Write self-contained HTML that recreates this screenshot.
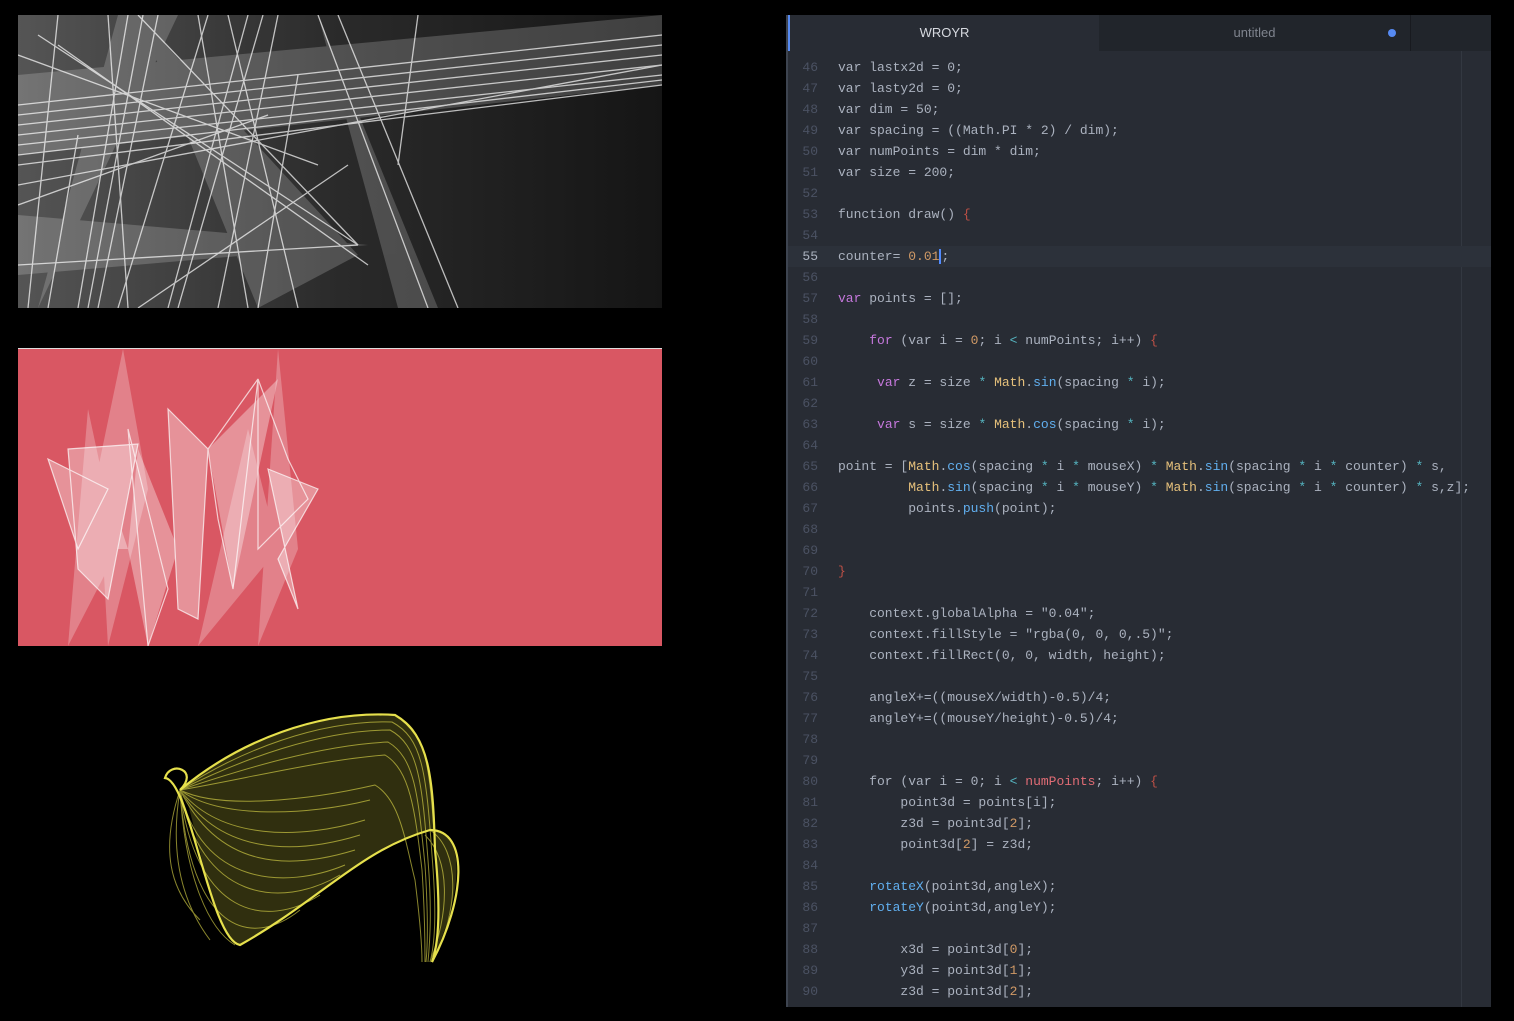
<!DOCTYPE html>
<html><head><meta charset="utf-8"><style>
*{margin:0;padding:0;box-sizing:border-box}
body{width:1514px;height:1021px;background:#000;position:relative;overflow:hidden;font-family:"Liberation Sans",sans-serif}
.p{position:absolute}
#ed{left:786px;top:15px;width:705px;height:992px;background:#282c34;border-left:2px solid #3d4450;overflow:hidden}
.tabs{position:absolute;left:0;top:0;width:705px;height:36px;background:#21252b}
.tab1{position:absolute;left:0;top:0;width:311px;height:36px;background:#282c34;border-left:2px solid #568af2;color:#d7dae0;font-size:13px;text-align:center;line-height:36px}
.tab2{position:absolute;left:311px;top:0;width:312px;height:36px;color:#7f848e;font-size:13px;text-align:center;line-height:36px;border-right:1px solid #181a1f}
.dot{position:absolute;left:600px;top:14px;width:8px;height:8px;border-radius:50%;background:#568af2}
.code{position:absolute;left:0;top:42px;width:705px;font-family:"Liberation Mono",monospace;font-size:13px;color:#abb2bf}
.l{height:21px;line-height:21px;position:relative;white-space:pre}
.n{display:inline-block;width:50px;text-align:right;padding-right:20px;color:#4b5263}
.hl{background:#2c313a}
.hl .n{color:#abb2bf}
.k{color:#c678dd}.num{color:#d19a66}.m{color:#e5c07b}.f{color:#61afef}.b{color:#be5046}.o{color:#56b6c2}
.guide{position:absolute;left:673px;top:36px;width:1px;height:956px;background:#333841}
</style></head><body>
<svg class="p" style="left:18px;top:15px" width="644" height="293" viewBox="0 0 644 293">
<defs><linearGradient id="g1" x1="0" y1="0" x2="1" y2="0"><stop offset="0" stop-color="#555"/><stop offset="0.5" stop-color="#2a2a2a"/><stop offset="1" stop-color="#151515"/></linearGradient></defs>
<rect width="644" height="293" fill="url(#g1)"/>
<g fill="#fff" opacity="0.18">
<polygon points="0,60 644,0 644,70 0,140"/><polygon points="120,0 340,240 240,293"/><polygon points="20,293 100,0 160,0"/>
<polygon points="300,0 420,293 380,293"/><polygon points="0,200 350,230 0,260"/><polygon points="0,100 644,30 644,50 0,130"/>
</g>
<g stroke="#fff" stroke-width="1.3" opacity="0.7">
<line x1="0" y1="90" x2="644" y2="20"/><line x1="0" y1="100" x2="644" y2="30"/><line x1="0" y1="110" x2="644" y2="40"/><line x1="0" y1="120" x2="644" y2="50"/><line x1="0" y1="130" x2="644" y2="60"/><line x1="0" y1="150" x2="644" y2="70"/><line x1="0" y1="140" x2="644" y2="65"/>
<line x1="60" y1="293" x2="110" y2="0"/><line x1="70" y1="293" x2="125" y2="0"/><line x1="80" y1="293" x2="140" y2="0"/><line x1="100" y1="293" x2="190" y2="0"/><line x1="150" y1="293" x2="230" y2="0"/><line x1="160" y1="293" x2="245" y2="0"/>
<line x1="200" y1="293" x2="260" y2="0"/><line x1="280" y1="293" x2="210" y2="0"/><line x1="340" y1="230" x2="120" y2="0"/><line x1="20" y1="20" x2="340" y2="230"/><line x1="40" y1="30" x2="350" y2="250"/>
<line x1="0" y1="250" x2="340" y2="230"/><line x1="300" y1="0" x2="410" y2="293"/><line x1="320" y1="0" x2="440" y2="293"/><line x1="0" y1="190" x2="250" y2="100"/>
<line x1="30" y1="293" x2="60" y2="120"/><line x1="240" y1="293" x2="280" y2="60"/><line x1="0" y1="40" x2="300" y2="150"/><line x1="180" y1="0" x2="230" y2="293"/>
<line x1="400" y1="0" x2="380" y2="150"/><line x1="0" y1="170" x2="644" y2="50"/><line x1="120" y1="293" x2="330" y2="150"/><line x1="90" y1="0" x2="110" y2="293"/><line x1="10" y1="293" x2="40" y2="0"/>
</g></svg>
<div class="p" style="left:18px;top:348px;width:644px;height:1px;background:#ddd"></div>
<svg class="p" style="left:18px;top:349px" width="644" height="297" viewBox="0 0 644 297">
<rect width="644" height="297" fill="#d95763"/>
<g fill="#fff" opacity="0.25">
<polygon points="105,0 130,140 90,297 80,120"/><polygon points="260,0 280,200 240,297"/><polygon points="230,80 180,297 260,200"/>
<polygon points="70,60 50,297 100,200"/>
</g>
<g fill="none" stroke="#fff" stroke-width="1.2" opacity="0.7">
<polygon points="50,100 120,95 90,250 60,220"/><polygon points="110,80 150,240 130,297"/><polygon points="150,60 190,100 180,270 160,260"/>
<polygon points="190,100 240,30 215,240 200,170"/><polygon points="240,30 270,110 290,150 240,200"/><polygon points="30,110 90,140 60,200"/>
<polygon points="250,120 300,140 260,210 280,260"/>
</g>
<g fill="#fff" opacity="0.35">
<polygon points="50,100 120,95 90,250 60,220"/><polygon points="150,60 190,100 180,270 160,260"/><polygon points="190,100 260,30 215,240"/>
<polygon points="250,120 300,140 260,210 280,260"/><polygon points="30,110 90,140 110,200 60,200"/><polygon points="120,100 160,200 130,297 110,200"/>
</g></svg>
<svg class="p" style="left:160px;top:700px" width="330" height="280" viewBox="0 0 330 280">
<path d="M20,90 C80,40 160,10 235,15 C270,35 273,80 275,150 C280,200 280,240 272,262 C300,200 310,130 270,130 C200,150 160,200 80,245 C50,240 30,80 20,90Z" fill="#8a862a" opacity="0.35"/>
<g fill="none" stroke="#e6e04c" stroke-width="1" opacity="0.6">
<path d="M20,90 C80,40 160,10 235,15 C265,30 270,60 275,150 C280,200 280,240 272,262"/>
<path d="M20,90 C80,50 160,20 232,22 C262,38 266,70 272,155 C276,205 276,240 270,262"/>
<path d="M20,90 C80,60 160,30 230,30 C258,45 262,80 268,160 C272,210 270,240 268,262"/>
<path d="M20,90 C80,70 160,45 228,42 C255,58 258,95 265,165 C268,212 268,242 266,262"/>
<path d="M20,90 C80,80 160,60 225,55 C250,70 255,110 262,170 C265,215 265,245 265,262"/>
<path d="M20,90 C60,110 150,100 215,85 C240,100 245,140 255,180 C260,220 262,245 262,262"/>
<path d="M20,90 C60,120 150,115 210,100"/><path d="M20,90 C60,140 140,140 205,120"/><path d="M20,90 C60,155 135,155 200,135"/><path d="M20,90 C60,170 130,170 195,150"/>
<path d="M20,90 C40,185 125,190 185,165"/><path d="M20,90 C40,200 120,210 180,175"/><path d="M20,90 C35,215 105,230 160,195"/><path d="M20,90 C30,230 90,250 140,210"/>
<path d="M20,90 C10,150 20,200 50,240"/><path d="M20,90 C0,150 10,190 40,220"/><path d="M20,90 C25,180 50,230 75,245"/>
<path d="M270,130 C300,150 300,210 272,262"/><path d="M265,135 C290,160 290,210 270,262"/>
</g>
<g fill="none" stroke="#e6e04c" stroke-width="2.2">
<path d="M20,90 C80,40 160,10 235,15 C270,35 273,80 275,150 C280,200 280,240 272,262"/>
<path d="M20,90 C40,70 10,60 5,78 C30,80 50,240 80,245 C160,200 200,150 270,130 C310,130 305,200 272,262"/>
</g></svg>
<div id="ed" class="p">
<div class="tabs"><div class="tab1">WROYR</div><div class="tab2">untitled</div><div class="dot"></div></div>
<div class="guide"></div>
<div class="code">
<div class="l"><span class="n">46</span>var lastx2d = 0;</div>
<div class="l"><span class="n">47</span>var lasty2d = 0;</div>
<div class="l"><span class="n">48</span>var dim = 50;</div>
<div class="l"><span class="n">49</span>var spacing = ((Math.PI * 2) / dim);</div>
<div class="l"><span class="n">50</span>var numPoints = dim * dim;</div>
<div class="l"><span class="n">51</span>var size = 200;</div>
<div class="l"><span class="n">52</span></div>
<div class="l"><span class="n">53</span>function draw() <span class="b">{</span></div>
<div class="l"><span class="n">54</span></div>
<div class="l hl"><span class="n">55</span>counter= <span class="num">0.01</span><span style="border-left:2px solid #528bff">;</span></div>
<div class="l"><span class="n">56</span></div>
<div class="l"><span class="n">57</span><span class="k">var</span> points = [];</div>
<div class="l"><span class="n">58</span></div>
<div class="l"><span class="n">59</span>    <span class="k">for</span> (var i = <span class="num">0</span>; i <span class="o">&lt;</span> numPoints; i++) <span class="b">{</span></div>
<div class="l"><span class="n">60</span></div>
<div class="l"><span class="n">61</span>     <span class="k">var</span> z = size <span class="o">*</span> <span class="m">Math</span>.<span class="f">sin</span>(spacing <span class="o">*</span> i);</div>
<div class="l"><span class="n">62</span></div>
<div class="l"><span class="n">63</span>     <span class="k">var</span> s = size <span class="o">*</span> <span class="m">Math</span>.<span class="f">cos</span>(spacing <span class="o">*</span> i);</div>
<div class="l"><span class="n">64</span></div>
<div class="l"><span class="n">65</span>point = [<span class="m">Math</span>.<span class="f">cos</span>(spacing <span class="o">*</span> i <span class="o">*</span> mouseX) <span class="o">*</span> <span class="m">Math</span>.<span class="f">sin</span>(spacing <span class="o">*</span> i <span class="o">*</span> counter) <span class="o">*</span> s,</div>
<div class="l"><span class="n">66</span>         <span class="m">Math</span>.<span class="f">sin</span>(spacing <span class="o">*</span> i <span class="o">*</span> mouseY) <span class="o">*</span> <span class="m">Math</span>.<span class="f">sin</span>(spacing <span class="o">*</span> i <span class="o">*</span> counter) <span class="o">*</span> s,z];</div>
<div class="l"><span class="n">67</span>         points.<span class="f">push</span>(point);</div>
<div class="l"><span class="n">68</span></div>
<div class="l"><span class="n">69</span></div>
<div class="l"><span class="n">70</span><span class="b">}</span></div>
<div class="l"><span class="n">71</span></div>
<div class="l"><span class="n">72</span>    context.globalAlpha = "0.04";</div>
<div class="l"><span class="n">73</span>    context.fillStyle = "rgba(0, 0, 0,.5)";</div>
<div class="l"><span class="n">74</span>    context.fillRect(0, 0, width, height);</div>
<div class="l"><span class="n">75</span></div>
<div class="l"><span class="n">76</span>    angleX+=((mouseX/width)-0.5)/4;</div>
<div class="l"><span class="n">77</span>    angleY+=((mouseY/height)-0.5)/4;</div>
<div class="l"><span class="n">78</span></div>
<div class="l"><span class="n">79</span></div>
<div class="l"><span class="n">80</span>    for (var i = 0; i <span class="o">&lt;</span> <span style="color:#e06c75">numPoints</span>; i++) <span class="b">{</span></div>
<div class="l"><span class="n">81</span>        point3d = points[i];</div>
<div class="l"><span class="n">82</span>        z3d = point3d[<span class="num">2</span>];</div>
<div class="l"><span class="n">83</span>        point3d[<span class="num">2</span>] = z3d;</div>
<div class="l"><span class="n">84</span></div>
<div class="l"><span class="n">85</span>    <span class="f">rotateX</span>(point3d,angleX);</div>
<div class="l"><span class="n">86</span>    <span class="f">rotateY</span>(point3d,angleY);</div>
<div class="l"><span class="n">87</span></div>
<div class="l"><span class="n">88</span>        x3d = point3d[<span class="num">0</span>];</div>
<div class="l"><span class="n">89</span>        y3d = point3d[<span class="num">1</span>];</div>
<div class="l"><span class="n">90</span>        z3d = point3d[<span class="num">2</span>];</div>
</div></div>
</body></html>
